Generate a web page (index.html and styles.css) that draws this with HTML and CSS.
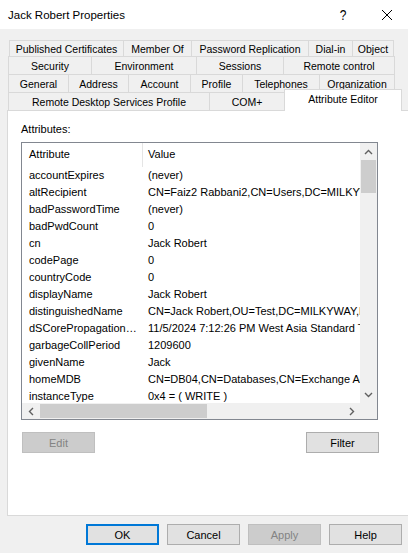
FILE: index.html
```html
<!DOCTYPE html>
<html lang="en">

<head>
    <meta charset="UTF-8">
    <title>Jack Robert Properties</title>
    <link rel="stylesheet" href="styles.css">
</head>

<body>
    <div class="window">
        <header class="titlebar">
            <span class="title">Jack Robert Properties</span>
            <span class="help">?</span>
            <span class="close">
                <svg width="12" height="12" viewBox="0 0 12 12">
                    <path d="M1 1 L11 11 M11 1 L1 11" stroke="#000" stroke-width="1" fill="none" />
                </svg>
            </span>
        </header>

        <div class="dialog">
            <!-- Property sheet tabs, four stacked rows -->
            <div class="tabs">
                <div class="tab-row row-1">
                    <div class="tab">Published Certificates</div>
                    <div class="tab">Member Of</div>
                    <div class="tab">Password Replication</div>
                    <div class="tab">Dial-in</div>
                    <div class="tab">Object</div>
                </div>
                <div class="tab-row row-2">
                    <div class="tab">Security</div>
                    <div class="tab">Environment</div>
                    <div class="tab">Sessions</div>
                    <div class="tab">Remote control</div>
                </div>
                <div class="tab-row row-3">
                    <div class="tab">General</div>
                    <div class="tab">Address</div>
                    <div class="tab">Account</div>
                    <div class="tab">Profile</div>
                    <div class="tab">Telephones</div>
                    <div class="tab">Organization</div>
                </div>
                <div class="tab-row row-4">
                    <div class="tab">Remote Desktop Services Profile</div>
                    <div class="tab">COM+</div>
                    <div class="tab active">Attribute Editor</div>
                </div>
            </div>

            <div class="panel">
                <div class="field-label">Attributes:</div>

                <div class="listbox">
                    <div class="list-view">
                        <div class="list-header">
                            <div class="col-attr">Attribute</div>
                            <div class="col-value">Value</div>
                        </div>
                        <div class="list-row"><div class="col-attr">accountExpires</div><div class="col-value">(never)</div></div>
                        <div class="list-row"><div class="col-attr">altRecipient</div><div class="col-value">CN=Faiz2 Rabbani2,CN=Users,DC=MILKYWAY,DC=local</div></div>
                        <div class="list-row"><div class="col-attr">badPasswordTime</div><div class="col-value">(never)</div></div>
                        <div class="list-row"><div class="col-attr">badPwdCount</div><div class="col-value">0</div></div>
                        <div class="list-row"><div class="col-attr">cn</div><div class="col-value">Jack Robert</div></div>
                        <div class="list-row"><div class="col-attr">codePage</div><div class="col-value">0</div></div>
                        <div class="list-row"><div class="col-attr">countryCode</div><div class="col-value">0</div></div>
                        <div class="list-row"><div class="col-attr">displayName</div><div class="col-value">Jack Robert</div></div>
                        <div class="list-row"><div class="col-attr">distinguishedName</div><div class="col-value">CN=Jack Robert,OU=Test,DC=MILKYWAY,DC=local</div></div>
                        <div class="list-row"><div class="col-attr">dSCorePropagationData</div><div class="col-value">11/5/2024 7:12:26 PM West Asia Standard Time</div></div>
                        <div class="list-row"><div class="col-attr">garbageCollPeriod</div><div class="col-value">1209600</div></div>
                        <div class="list-row"><div class="col-attr">givenName</div><div class="col-value">Jack</div></div>
                        <div class="list-row"><div class="col-attr">homeMDB</div><div class="col-value">CN=DB04,CN=Databases,CN=Exchange Administrative Group</div></div>
                        <div class="list-row"><div class="col-attr">instanceType</div><div class="col-value">0x4 = ( WRITE )</div></div>
                    </div>

                    <div class="vscroll">
                        <div class="arrow">
                            <svg width="9" height="6" viewBox="0 0 9 6"><path d="M1 5 L4.5 1.5 L8 5" stroke="#606060" stroke-width="1.4" fill="none" /></svg>
                        </div>
                        <div class="track">
                            <div class="thumb"></div>
                        </div>
                        <div class="arrow">
                            <svg width="9" height="6" viewBox="0 0 9 6"><path d="M1 1 L4.5 4.5 L8 1" stroke="#606060" stroke-width="1.4" fill="none" /></svg>
                        </div>
                    </div>

                    <div class="hscroll">
                        <div class="arrow">
                            <svg width="6" height="9" viewBox="0 0 6 9"><path d="M5 1 L1.5 4.5 L5 8" stroke="#606060" stroke-width="1.4" fill="none" /></svg>
                        </div>
                        <div class="track">
                            <div class="thumb"></div>
                        </div>
                        <div class="arrow">
                            <svg width="6" height="9" viewBox="0 0 6 9"><path d="M1 1 L4.5 4.5 L1 8" stroke="#606060" stroke-width="1.4" fill="none" /></svg>
                        </div>
                    </div>

                    <div class="corner"></div>
                </div>

                <div class="panel-actions">
                    <button class="btn" disabled>Edit</button>
                    <button class="btn">Filter</button>
                </div>
            </div>

            <div class="dialog-buttons">
                <button class="btn default">OK</button>
                <button class="btn">Cancel</button>
                <button class="btn" disabled>Apply</button>
                <button class="btn">Help</button>
            </div>
        </div>
    </div>
</body>

</html>
```

FILE: styles.css
```css
body {
    margin: 0;
    font-family: "Liberation Sans", Arial, sans-serif;
    font-size: 11px;
    color: #000;
    background: #f0f0f0;
}

.window {
    width: 408px;
    height: 553px;
    display: flex;
    flex-direction: column;
    background: #f0f0f0;
    overflow: hidden;
}

/* Title bar */

.titlebar {
    height: 29px;
    background: #fff;
    display: flex;
    align-items: center;
}

.title {
    font-size: 11.5px;
    margin-left: 8px;
    flex: 1;
}

.help {
    font-size: 15px;
    width: 16px;
    margin-right: 30px;
    text-align: center;
    transform: scaleX(0.8);
}

.close {
    display: flex;
    margin-right: 15px;
    margin-top: 1px;
}

/* Dialog body */

.dialog {
    flex: 1;
    display: flex;
    flex-direction: column;
}

.tabs {
    margin-top: 11px;
    margin-left: 8px;
    display: flex;
    flex-direction: column;
}

.tab-row {
    display: grid;
    height: 18px;
}

.row-1 {
    height: 16px;
    margin-left: 1px;
    grid-template-columns: 114px 68px 117px 44px 41px;
}

.row-2 {
    grid-template-columns: 83px 105px 87px 111px;
}

.row-3 {
    grid-template-columns: 60px 60px 62px 52px 77px 75px;
}

.row-4 {
    grid-template-columns: 201px 75px 117px;
}

.tab {
    font-size: 10.5px;
    border: 1px solid #d9d9d9;
    border-bottom: none;
    margin-right: -1px;
    display: flex;
    align-items: center;
    justify-content: center;
    white-space: nowrap;
    background: #f0f0f0;
}

.tab.active {
    background: #fff;
    margin-top: -3px;
    margin-bottom: -1px;
    padding-bottom: 3px;
    position: relative;
    z-index: 1;
}

.panel {
    margin-left: 7px;
    width: 391px;
    height: 404px;
    background: #fff;
    border: 1px solid #d9d9d9;
    display: flex;
    flex-direction: column;
    padding-left: 13px;
    box-sizing: content-box;
}

.field-label {
    margin-top: 12px;
    line-height: 13px;
    margin-bottom: 6px;
}

/* Attribute list */

.listbox {
    width: 355px;
    height: 276px;
    border: 1px solid #828790;
    display: grid;
    grid-template-columns: 338px 17px;
    grid-template-rows: 260px 16px;
}

.list-view {
    overflow: hidden;
    background: #fff;
}

.list-header,
.list-row {
    display: grid;
    grid-template-columns: 121px 1fr;
    white-space: nowrap;
}

.list-header {
    height: 24px;
    line-height: 22px;
}

.list-header .col-attr {
    border-right: 1px solid #e5e5e5;
}

.list-row {
    height: 17px;
    line-height: 17px;
}

.col-attr {
    padding-left: 7px;
    overflow: hidden;
    text-overflow: ellipsis;
}

.col-value {
    padding-left: 5px;
    overflow: hidden;
}

.vscroll {
    background: #f0f0f0;
    display: flex;
    flex-direction: column;
}

.vscroll .arrow {
    height: 17px;
    display: flex;
    align-items: center;
    justify-content: center;
}

.vscroll .track {
    flex: 1;
}

.vscroll .thumb {
    height: 33px;
    margin: 0 1px;
    background: #cdcdcd;
}

.hscroll {
    background: #f0f0f0;
    display: flex;
}

.hscroll .arrow {
    width: 17px;
    display: flex;
    align-items: center;
    justify-content: center;
}

.hscroll .track {
    flex: 1;
    padding: 1px 0;
}

.hscroll .thumb {
    width: 167px;
    height: 100%;
    margin-left: 1px;
    background: #cdcdcd;
}

.corner {
    background: #f0f0f0;
}

/* Buttons */

.btn {
    width: 73px;
    height: 21px;
    padding: 0;
    font-family: inherit;
    font-size: 11px;
    color: #000;
    background: #e1e1e1;
    border: 1px solid #adadad;
}

.btn:disabled {
    background: #cccccc;
    border-color: #bfbfbf;
    color: #838383;
}

.btn.default {
    border: 2px solid #0078d7;
}

.panel-actions {
    width: 357px;
    margin-top: 12px;
    display: flex;
    justify-content: space-between;
    margin-left: 1px;
}

.dialog-buttons {
    margin-top: 8px;
    margin-right: 6px;
    display: flex;
    justify-content: flex-end;
    gap: 8px;
}
```
